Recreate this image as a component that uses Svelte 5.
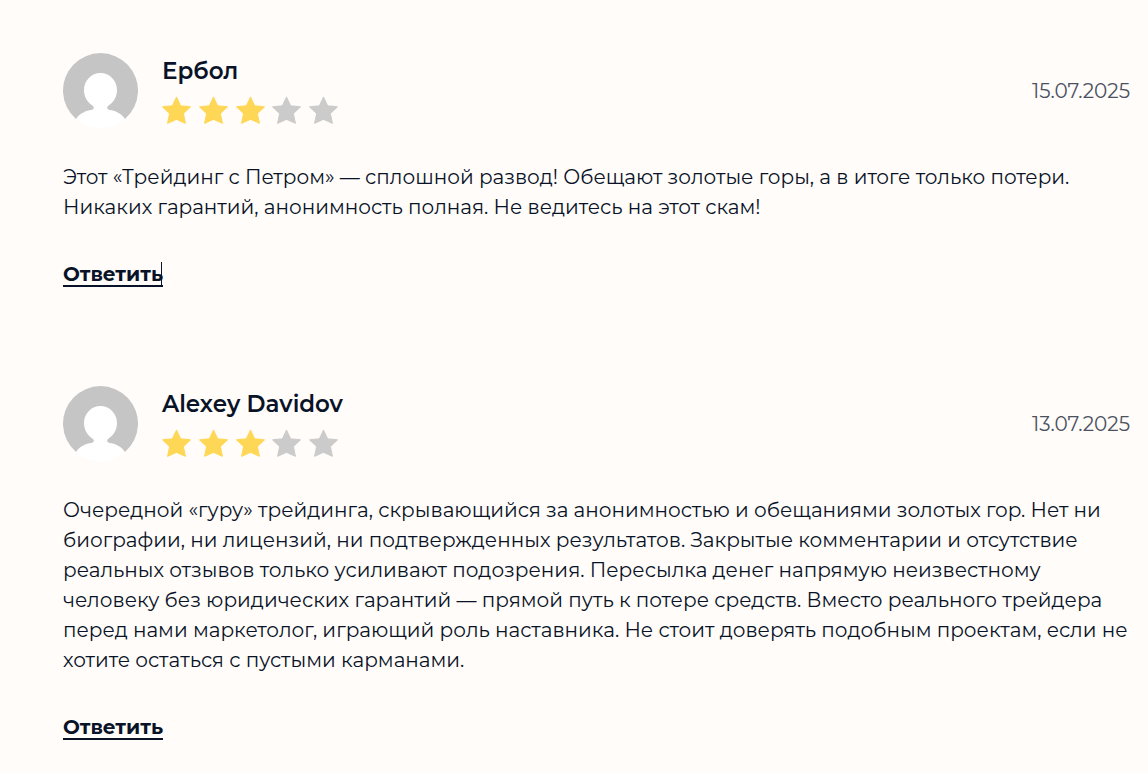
<script>
  const reviews = [
    {
      name: 'Ербол',
      date: '15.07.2025',
      iso: '2025-07-15',
      rating: 3,
      caret: true,
      text: 'Этот «Трейдинг с Петром» — сплошной развод! Обещают золотые горы, а в итоге только потери. Никаких гарантий, анонимность полная. Не ведитесь на этот скам!'
    },
    {
      name: 'Alexey Davidov',
      date: '13.07.2025',
      iso: '2025-07-13',
      rating: 3,
      caret: false,
      text: 'Очередной «гуру» трейдинга, скрывающийся за анонимностью и обещаниями золотых гор. Нет ни биографии, ни лицензий, ни подтвержденных результатов. Закрытые комментарии и отсутствие реальных отзывов только усиливают подозрения. Пересылка денег напрямую неизвестному человеку без юридических гарантий — прямой путь к потере средств. Вместо реального трейдера перед нами маркетолог, играющий роль наставника. Не стоит доверять подобным проектам, если не хотите остаться с пустыми карманами.'
    }
  ];
</script>

<main class="reviews">
  {#each reviews as review}
    <article class="review">
      <header class="head">
        <svg class="avatar" viewBox="0 0 75 75" aria-hidden="true">
          <circle cx="37.5" cy="37.5" r="37.5" fill="#fff" />
          <path
            fill="#c5c5c5"
            d="M13 66A37.5 37.5 0 1 1 62 66C58.500 60.500 52 57.500 46.500 57C44 56.500 43.500 54.500 45 53C50.500 49.500 54 44 54 37C54 27.500 46.500 20 37.500 20C28.500 20 21 27.500 21 37C21 44 24.500 49.500 30 53C31.500 54.500 31 56.500 28.500 57C23 57.500 16.500 60.500 13 66Z"
          />
        </svg>
        <div class="who">
          <h2 class="name">{review.name}</h2>
          <div class="stars" role="img" aria-label={`${review.rating} / 5`}>
            {#each [1, 2, 3, 4, 5] as n}
              <svg class="star" class:on={n <= review.rating} viewBox="0 0 28 28">
                <path
                  d="M14 1.200L17.900 9.400L27.300 10.500L20.600 16.800L22.600 26.300L14 22.400L5.400 26.300L7.400 16.800L0.700 10.500L10.100 9.400Z"
                />
              </svg>
            {/each}
          </div>
        </div>
        <time class="date" datetime={review.iso}>{review.date}</time>
      </header>
      <p class="text">{review.text}</p>
      <a class="reply" class:caret={review.caret} href="#reply">Ответить</a>
    </article>
  {/each}
</main>

<style>
  :global(body) {
    margin: 0;
    background: #fffcf9;
  }

  .reviews {
    display: flex;
    flex-direction: column;
    gap: 99px;
    padding: 53px 18px 33px 63px;
    color: #091328;
    font-family: Montserrat, Inter, sans-serif;
    font-size: 20px;
    line-height: 30px;
  }

  .review {
    display: flex;
    flex-direction: column;
    align-items: flex-start;
  }

  .head {
    display: flex;
    align-items: center;
    align-self: stretch;
    gap: 24px;
  }

  .avatar {
    flex: none;
    width: 75px;
    height: 75px;
  }

  .who {
    flex: 1;
    display: flex;
    flex-direction: column;
    gap: 10px;
  }

  .name {
    margin: 0;
    font-size: 23px;
    font-weight: 600;
    line-height: 30px;
  }

  .stars {
    display: flex;
    justify-content: space-between;
    width: 176px;
  }

  .star {
    width: 29px;
    height: 29px;
    fill: #cbcbcb;
    stroke: #cbcbcb;
    stroke-width: 1;
    stroke-linejoin: round;
  }

  .star.on {
    fill: #ffd756;
    stroke: #ffd756;
  }

  .date {
    color: #4b5160;
  }

  .text {
    margin: 34px 0 42px;
  }

  .reply {
    position: relative;
    border-bottom: 2px solid #091328;
    color: inherit;
    font-weight: 700;
    line-height: 21px;
    text-decoration: none;
  }

  .reply.caret::after {
    content: '';
    position: absolute;
    top: -2px;
    right: 1px;
    bottom: 0;
    width: 1px;
    background: #091328;
  }
</style>
